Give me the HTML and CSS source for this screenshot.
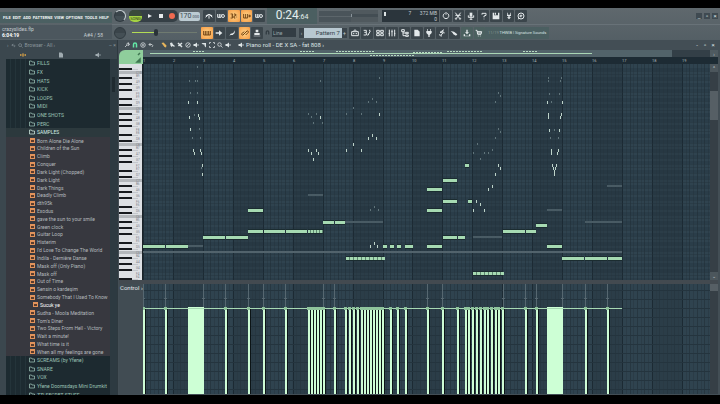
FILE: index.html
```
<!DOCTYPE html>
<html lang="en">
<head>
  <meta charset="UTF-8" />
  <meta name="viewport" content="width=device-width, initial-scale=1.0"/>
  <title>crazyslides.flp</title>
  <link rel="stylesheet" href="styles.css">
</head>
<body>
  <svg class="sprite" aria-hidden="true">
    <symbol id="i-wait" viewBox="0 0 12 12"><path d="M1 8 6 3l5 5M6 3v7M1 6l3-2M11 6 8 4"/></symbol>
    <symbol id="i-loop" viewBox="0 0 12 12"><path d="M1 3v5h5V3M3.500 3v5"/><circle cx="9" cy="6" r="2.200"/></symbol>
    <symbol id="i-count" viewBox="0 0 12 12"><path d="M1 3h3v6H1M2 6h2M6 3h2v3H6v3h2M10 4v1M10 7v1"/></symbol>
    <symbol id="i-step" viewBox="0 0 12 12"><path d="M1 3v6h6V3M4 3v6M8 6h4M10 4v4"/></symbol>
    <symbol id="i-keys" viewBox="0 0 12 12"><path d="M1 3v6h10V3M3.500 3v6M6 3v6M8.500 3v6"/></symbol>
    <symbol id="i-arrow" viewBox="0 0 12 12"><path class="fill" d="M1 5h5V2l5 4-5 4V7H1z"/></symbol>
    <symbol id="i-slide" viewBox="0 0 12 12"><path class="fill" d="M2 10 4 7l4-1 2-4v4L7 9H4z"/></symbol>
    <symbol id="i-link" viewBox="0 0 12 12"><path d="M5 7 3 9a1.500 1.500 0 0 1-2-2l4-3M7 5l2-2a1.500 1.500 0 0 1 2 2L7 9M4 8l4-4"/></symbol>
    <symbol id="i-stamp" viewBox="0 0 12 12"><path class="fill" d="M4 1h4v4H4zM2 6h8v3H2zM1 10h10v1H1z"/></symbol>
    <symbol id="i-list" viewBox="0 0 12 12"><path d="M1 4h10v6H1zM3 7h2M7 7h2M3 4l3-3 3 3"/></symbol>
    <symbol id="i-roll" viewBox="0 0 12 12"><path d="M1 2h4v3H2M1 9h4V5M7 10l4-7M7 8h2M9 2h2"/></symbol>
    <symbol id="i-rack" viewBox="0 0 12 12"><path d="M1 2h4v3H1zM7 2h4v3H7zM1 7h4v3H1zM7 7h4v3H7z"/></symbol>
    <symbol id="i-mixer" viewBox="0 0 12 12"><path d="M2 1v10M6 1v10M10 1v10M1 7h2M5 4h2M9 7h2"/></symbol>
    <symbol id="i-tree" viewBox="0 0 12 12"><path d="M1 1h4v3H1zM3 4v6h4M3 6h4M7 5h4v2H7zM7 9h4v2H7z"/></symbol>
    <symbol id="i-file" viewBox="0 0 12 12"><path class="fill" d="M2 1h5l3 3v7H2z"/></symbol>
    <symbol id="i-plug" viewBox="0 0 12 12"><path class="fill" d="M3 0h1v3h4V0h1v3h1v3L7 9v3H5V9L2 6V3h1z"/></symbol>
    <symbol id="i-brush" viewBox="0 0 12 12"><path d="M9 1 3 5l5 1-4 3 2 2M2 8l2 3M6 3l4 3"/></symbol>
    <symbol id="i-touch" viewBox="0 0 12 12"><path class="fill" d="m1 3 5 1 5 4-2 2-4-2-1-2z"/></symbol>
    <symbol id="i-down" viewBox="0 0 12 12"><path class="fill" d="M5 1h2v4h2L6 8 3 5h2zM1 8h2v2h6V8h2v3H1z"/></symbol>
    <symbol id="i-cart" viewBox="0 0 12 12"><path d="M1 2h2l1 6h5l1-4H3M5 10v1M8 10v1M4 6h5"/></symbol>
    <symbol id="i-undo" viewBox="0 0 12 12"><path d="M4 2a4.200 4.200 0 1 0 4 0M6 0v4"/></symbol>
    <symbol id="i-cut" viewBox="0 0 12 12"><path d="m2 1 6 8M10 1 4 9M2 5h8"/><circle cx="3" cy="10" r="1"/><circle cx="9" cy="10" r="1"/></symbol>
    <symbol id="i-mic" viewBox="0 0 12 12"><path class="fill" d="M4 1h4v6H4z"/><path d="M2 5v3h8V5M6 8v3M4 11h4"/></symbol>
    <symbol id="i-help" viewBox="0 0 12 12"><path d="M3 4V2h6v3L6 6v2M6 10v1"/></symbol>
    <symbol id="i-save" viewBox="0 0 12 12"><path class="fill" d="M1 1h2v4h6V1h2v10H1zM4 1h2v3H4z"/></symbol>
    <symbol id="i-export" viewBox="0 0 12 12"><path class="fill" d="M3 1h1v3h4V1h1v5H3zM5 6h2v2h2l-3 3-3-3h2z"/></symbol>
    <symbol id="i-chat" viewBox="0 0 12 12"><circle cx="6" cy="6" r="4.500"/><path d="M4 5h4M4 7h3M3 9l-1 2"/></symbol>
    <symbol id="i-wrench" viewBox="0 0 12 12"><path d="m2 10 4-4M6 6a3 3 0 0 1 4-4L8 4l1 1 2-1a3 3 0 0 1-4 3"/></symbol>
    <symbol id="i-magnet" viewBox="0 0 12 12"><path class="thick" d="M3 11V5a3 3 0 0 1 6 0v6"/></symbol>
    <symbol id="i-ring" viewBox="0 0 12 12"><circle cx="6" cy="6" r="4.500"/><circle cx="6" cy="6" r="1.200"/></symbol>
    <symbol id="i-back" viewBox="0 0 12 12"><path d="M5 2 2 5l3 3M2 5h6q3 1 0 5"/></symbol>
    <symbol id="i-pencil" viewBox="0 0 12 12"><path class="fill" d="m1 2 4-1 6 6-1 4-3-1z"/></symbol>
    <symbol id="i-paint" viewBox="0 0 12 12"><path class="fill" d="m2 2 4-1 2 4 3 2v3L7 8 5 10 3 7z"/></symbol>
    <symbol id="i-erase" viewBox="0 0 12 12"><path class="thick" d="m2 2 8 8M10 2 3 8M2 5h3"/></symbol>
    <symbol id="i-no" viewBox="0 0 12 12"><circle cx="6" cy="6" r="4.500"/><path d="m3 9 6-6"/></symbol>
    <symbol id="i-mute" viewBox="0 0 12 12"><path class="fill" d="M1 4h3l4-3v10L4 8H1z"/><path d="M10 4v4"/></symbol>
    <symbol id="i-slice" viewBox="0 0 12 12"><path class="fill" d="M1 2h9v9L7 8V5H4z"/></symbol>
    <symbol id="i-select" viewBox="0 0 12 12"><path d="M1 4V1h3M8 1h3v3M11 8v3H8M4 11H1V8"/></symbol>
    <symbol id="i-zoom" viewBox="0 0 12 12"><circle cx="5" cy="5" r="3.500"/><path d="m8 8 3 3"/></symbol>
    <symbol id="i-folder" viewBox="0 0 12 12"><path d="M1 10V2h4l1 2h5v6z"/></symbol>
    <symbol id="i-plus" viewBox="0 0 12 12"><path d="M6 2v8M2 6h8M1 4v4M11 4v4"/></symbol>
  </svg>

  <main class="app">
    <header class="toolbar">
      <div class="info">
        <nav class="menu">
          <button>FILE</button><button>EDIT</button><button>ADD</button><button>PATTERNS</button><button>VIEW</button><button>OPTIONS</button><button>TOOLS</button><button>HELP</button>
        </nav>
        <div class="hint">
          <span>crazyslides.flp</span>
          <span class="hint-row"><b>6:04:19</b><span>A#4 / 58</span></span>
        </div>
      </div>

      <div class="controls">
        <div class="row">
          <button class="knob lit" aria-label="Main volume"></button>
          <div class="transport">
            <button class="mode" aria-label="Song mode">SONG</button>
            <button class="play" aria-label="Play"></button>
            <button class="stop" aria-label="Stop"></button>
            <button class="record" aria-label="Record"></button>
          </div>
          <div class="tempo">170<small>.000</small></div>
          <div class="tools">
            <button class="tool" aria-label="Wait for input"><svg><use href="#i-wait"/></svg></button>
            <button class="tool" aria-label="Loop record"><svg><use href="#i-loop"/></svg></button>
            <button class="tool on" aria-label="Countdown"><svg><use href="#i-count"/></svg></button>
            <button class="tool on" aria-label="Step edit"><svg><use href="#i-step"/></svg></button>
            <button class="tool" aria-label="Overdub"><svg><use href="#i-loop"/></svg></button>
          </div>
          <div class="time">0:24<small>:64</small></div>
          <div class="scope"><i></i><i></i></div>
          <div class="pitch"><i></i></div>
          <div class="cpu"><i></i><span>7</span><span class="mem">372 MB<br>0</span></div>
          <div class="tools seven">
            <button class="tool" aria-label="Undo"><svg><use href="#i-undo"/></svg></button>
            <button class="tool" aria-label="Cut"><svg><use href="#i-cut"/></svg></button>
            <button class="tool" aria-label="Record audio"><svg><use href="#i-mic"/></svg></button>
            <button class="tool" aria-label="Help"><svg><use href="#i-help"/></svg></button>
            <button class="tool" aria-label="Save"><svg><use href="#i-save"/></svg></button>
            <button class="tool" aria-label="Export"><svg><use href="#i-export"/></svg></button>
            <button class="tool" aria-label="Chat"><svg><use href="#i-chat"/></svg></button>
          </div>
          <div class="window-buttons boxed">
            <button aria-label="Minimize">_</button><button aria-label="Restore">▫</button><button aria-label="Close">×</button>
          </div>
        </div>

        <div class="row">
          <button class="knob" aria-label="Main pitch"></button>
          <input class="position" type="range" min="0" max="100" value="36" aria-label="Song position">
          <div class="tools">
            <button class="tool on" aria-label="Typing keyboard"><svg><use href="#i-keys"/></svg></button>
            <button class="tool" aria-label="Auto scroll"><svg><use href="#i-arrow"/></svg></button>
            <button class="tool" aria-label="Slide"><svg><use href="#i-slide"/></svg></button>
            <button class="tool on" aria-label="Group"><svg><use href="#i-link"/></svg></button>
            <button class="tool" aria-label="Multilink"><svg><use href="#i-stamp"/></svg></button>
          </div>
          <svg class="snap-icon"><use href="#i-magnet"/></svg>
          <select class="snap" aria-label="Snap"><option>Line</option></select>
          <div class="pattern">
            <button aria-label="Previous pattern">›</button>
            <select aria-label="Pattern"><option>Pattern 7</option></select>
            <button aria-label="Add pattern">+</button>
          </div>
          <div class="tools eleven">
            <button class="tool" aria-label="Playlist"><svg><use href="#i-list"/></svg></button>
            <button class="tool" aria-label="Piano roll"><svg><use href="#i-roll"/></svg></button>
            <button class="tool" aria-label="Channel rack"><svg><use href="#i-rack"/></svg></button>
            <button class="tool" aria-label="Mixer"><svg><use href="#i-mixer"/></svg></button>
            <button class="tool" aria-label="Browser"><svg><use href="#i-tree"/></svg></button>
            <button class="tool" aria-label="New file"><svg><use href="#i-file"/></svg></button>
            <button class="tool" aria-label="Plugins"><svg><use href="#i-plug"/></svg></button>
            <button class="tool" aria-label="Tempo tap"><svg><use href="#i-brush"/></svg></button>
            <button class="tool" aria-label="Touch"><svg><use href="#i-touch"/></svg></button>
            <button class="tool teal" aria-label="Download"><svg><use href="#i-down"/></svg></button>
            <button class="tool teal" aria-label="Shop"><svg><use href="#i-cart"/></svg></button>
          </div>
          <div class="news"><span>11/19</span> THWIB | Signature Sounds</div>
        </div>
      </div>
    </header>

    <div class="workspace">
      <aside class="browser">
        <div class="browser-head">
          <span>›</span><svg><use href="#i-back"/></svg><svg><use href="#i-zoom"/></svg><span>Browser - All ›</span><span class="push">– ×</span>
        </div>
        <div class="browser-tabs">
          <button class="active" aria-label="All"><svg><use href="#i-plus"/></svg></button>
          <button aria-label="Project"><svg><use href="#i-file"/></svg></button>
          <button aria-label="Plugins"><svg><use href="#i-mute"/></svg></button>
        </div>
        <div class="browser-body">
          <div class="tree"><ul id="tree"></ul></div>
          <div class="browser-scroll"><i></i></div>
        </div>
      </aside>

      <section class="roll">
        <div class="roll-head">
          <div class="roll-tools">
            <svg><use href="#i-wrench"/></svg>
            <svg class="green"><use href="#i-magnet"/></svg>
            <svg><use href="#i-ring"/></svg>
            <svg><use href="#i-back"/></svg>
          </div>
          <div class="roll-tools">
            <svg class="orange"><use href="#i-pencil"/></svg>
            <svg><use href="#i-paint"/></svg>
            <svg><use href="#i-erase"/></svg>
            <svg><use href="#i-no"/></svg>
            <svg><use href="#i-mute"/></svg>
            <svg><use href="#i-slice"/></svg>
            <svg><use href="#i-select"/></svg>
            <svg><use href="#i-zoom"/></svg>
            <svg><use href="#i-mute"/></svg>
          </div>
          <div class="roll-title"><svg><use href="#i-mute"/></svg><span>Piano roll - DE X SA - fat 808 ›</span></div>
          <div class="window-buttons">
            <button aria-label="Minimize">-</button><button aria-label="Restore">▫</button><button aria-label="Close">×</button>
          </div>
        </div>

        <div class="roll-body">
          <div class="corner"><svg viewBox="0 0 24 14"><path d="m19 5 2-2M18 12h3V9z"/></svg></div>
          <div class="scroller"><div class="thumb"><svg id="minimap"></svg></div><button aria-label="Scroll right">›</button></div>
          <svg class="ruler" id="ruler"></svg>
          <svg class="keys" id="keys"></svg>
          <svg class="notes" id="notes"></svg>
          <div class="vscroll"><button aria-label="Scroll up">^</button><i></i><button class="last" aria-label="Scroll down">⌄</button></div>
          <div class="splitter"></div>
          <div class="control-label"><button>Control ›</button></div>
          <svg class="velocity" id="velocity"></svg>
          <div class="vscroll low"><i></i></div>
        </div>
      </section>
    </div>
  </main>

  <script src="roll.js"></script>
</body>
</html>
```

FILE: styles.css
```
* {
  margin: 0;
  padding: 0;
  box-sizing: border-box;
}

body {
  height: 100vh;
  padding: 8px 0 9px;
  background: #000;
  overflow: hidden;
  color: #c3ccd0;
  font-family: Roboto, "Liberation Sans", sans-serif;
  font-size: 5px;
  line-height: 6px;
}

button,
select,
input {
  border: none;
  background: none;
  color: inherit;
  font: inherit;
  appearance: none;
}

svg {
  display: block;
  fill: none;
  stroke: currentColor;
  stroke-width: 1.5;
}

.fill {
  fill: currentColor;
  stroke: none;
}

.thick {
  stroke-width: 3;
}

.sprite {
  position: absolute;
  width: 0;
  height: 0;
}

.app {
  height: 100%;
  display: flex;
  flex-direction: column;
  background: #434f56;
}

/* toolbar */
.toolbar {
  display: flex;
  flex: 0 0 32px;
  background: linear-gradient(#5f686d, #545f65);
}

.info {
  flex: 0 0 112px;
  min-width: 0;
  display: flex;
  flex-direction: column;
  gap: 2px;
  padding: 4px 0 1px;
}

.menu {
  flex: 1;
  display: flex;
  align-items: center;
  justify-content: space-between;
  padding: 0 3px;
  background: #4b6062;
  color: #eef4f4;
  font-size: 4px;
  font-weight: bold;
}

.hint {
  flex: 0 0 14px;
  display: flex;
  flex-direction: column;
  padding: 1px 2px;
  background: #4c575e;
}

.hint-row {
  display: flex;
  justify-content: space-between;
  padding-right: 7px;
}

.hint b {
  color: #fff;
}

.controls {
  flex: 1;
  min-width: 0;
}

.row {
  height: 16px;
  display: flex;
  align-items: center;
  padding: 0 2px;
}

.row + .row {
  border-top: 1px solid #687278;
}

.knob {
  width: 12px;
  height: 12px;
  border: 1px solid #303a40;
  border-radius: 50%;
  background: linear-gradient(#3a444a 0 50%, #444f55 50%);
}

.knob.lit {
  border-color: #c9d1d4 #c9d1d4 #303a40 #303a40;
}

.transport {
  display: flex;
  align-items: center;
  justify-content: space-between;
  width: 49px;
  height: 12px;
  margin-left: 3px;
  padding-right: 3px;
  border-radius: 5px;
  background: #353f45;
}

.mode {
  width: 13px;
  height: 12px;
  padding-top: 5px;
  border-radius: 5px;
  background: linear-gradient(#3a4a3a 0 50%, #a5d343 50%);
  color: #26351a;
  font-size: 4px;
}

.play {
  border: 2px solid transparent;
  border-left: 4px solid #e6eaec;
  border-right: none;
}

.stop {
  width: 4px;
  height: 4px;
  background: #e6eaec;
}

.record {
  width: 6px;
  height: 6px;
  border-radius: 50%;
  background: #f06a50;
}

.tempo {
  width: 21px;
  height: 9px;
  margin: 0 3px 0 1px;
  border-radius: 2px;
  background: #bccbd2;
  color: #3a4850;
  font-size: 7px;
  line-height: 9px;
  text-align: center;
}

.tempo small {
  font-size: 4px;
}

.tools {
  display: flex;
  gap: 1px;
  width: 62px;
}

.tool {
  flex: 1;
  height: 12px;
  display: flex;
  align-items: center;
  justify-content: center;
  border-radius: 1px;
  background: #3b454b;
  color: #e3e8ea;
}

.tool svg {
  width: 8px;
  height: 8px;
}

.tool.on {
  background: radial-gradient(#ffd58b, #f79a41);
  color: #744413;
}

.tool.teal {
  background: #4b605f;
}

.time {
  width: 50px;
  margin-left: 2px;
  background: #4b5f61;
  color: #e5efee;
  font-size: 12px;
  line-height: 14px;
  text-align: center;
}

.time small {
  font-size: 7px;
}

.scope {
  display: grid;
  gap: 1px;
  width: 32px;
  margin-left: 2px;
}

.scope i {
  height: 5px;
  background: #4a545a;
}

.pitch {
  width: 27px;
  height: 12px;
  padding: 4px 0;
  background: #50595e;
}

.pitch i {
  display: block;
  height: 3px;
  border-left: 1px solid #89939a;
  background: #434d53;
}

.cpu {
  display: flex;
  justify-content: space-between;
  width: 57px;
  height: 12px;
  margin: 0 1px 0 4px;
  padding: 0 2px;
  background: #2b353c;
}

.cpu i {
  width: 2px;
  height: 4px;
  margin: 2px 14px 0 0;
  background: #dce3e5;
}

.mem {
  text-align: right;
}

.seven {
  width: 87px;
}

.eleven {
  width: 136px;
}

.window-buttons {
  display: flex;
  gap: 2px;
  margin-left: auto;
}

.window-buttons button {
  width: 6px;
  height: 6px;
  color: #dde3e6;
  font-size: 6px;
}

.boxed button {
  background: #3f4a51;
}

.position {
  width: 65px;
  height: 10px;
  margin: 0 4px 0 6px;
  background: linear-gradient(90deg, #b3dc55 36%, #6f7a70 36%) center / 100% 1px no-repeat;
}

.position::-webkit-slider-thumb {
  width: 4px;
  height: 7px;
  border-radius: 2px;
  background: #293238;
  appearance: none;
}

.snap-icon {
  width: 5px;
  height: 5px;
  margin: 0 2px;
  color: #303a40;
}

.snap {
  width: 24px;
  height: 9px;
  padding-left: 1px;
  background: #333d44;
  color: #9aa7ad;
}

.pattern {
  display: flex;
  width: 48px;
  height: 10px;
  margin: 0 2px 0 3px;
  background: #3a444b;
}

.pattern button {
  width: 5px;
}

.pattern select {
  flex: 1;
  padding-right: 2px;
  background: #b8c8d1;
  color: #34424b;
  font-size: 6px;
  text-align: right;
  text-align-last: right;
}

.news {
  width: 64px;
  height: 12px;
  padding-left: 3px;
  background: #4b5f61;
  color: #d8e2e1;
  font-size: 4px;
  line-height: 12px;
  white-space: nowrap;
}

.news span {
  color: #81938f;
}

/* browser */
.workspace {
  flex: 1;
  min-height: 0;
  display: flex;
}

.browser {
  flex: 0 0 118px;
  display: flex;
  flex-direction: column;
  padding-left: 4px;
  background: #3b474e;
  border-right: 1px solid #2e393f;
}

.browser-head {
  display: flex;
  flex: 0 0 10px;
  align-items: center;
  gap: 2px;
  padding: 0 1px 0 3px;
  color: #8b979d;
}

.browser-head svg {
  width: 5px;
  height: 5px;
}

.push {
  margin-left: auto;
}

.browser-tabs {
  display: flex;
  flex: 0 0 9px;
}

.browser-tabs button {
  flex: 1;
  color: #a0abb0;
}

.browser-tabs svg {
  width: 6px;
  height: 6px;
  margin: 0 auto;
}

.browser-tabs .active {
  color: #e4a845;
}

.browser-body {
  flex: 1;
  min-height: 0;
  display: flex;
  padding-left: 2px;
}

.tree {
  flex: 1;
  min-width: 0;
  overflow: hidden;
}

.tree ul {
  height: calc(100% + 4px);
  display: flex;
  flex-direction: column;
  list-style: none;
}

.tree li {
  flex: 10 1 0;
  min-height: 0;
  display: flex;
  align-items: center;
  gap: 2px;
  padding-left: 24px;
  background: #37383f;
  color: #b4b9bd;
  white-space: nowrap;
}

.tree li.folder {
  flex-grow: 11;
  padding-left: 23px;
  background: repeating-linear-gradient(90deg, #1d2b31 0 4px, #24343a 4px 5px) 0 0 / 20px 100% no-repeat #1d2a30;
  color: #9cc2b5;
}

.tree li.open {
  background: #2c393d;
  color: #d3eee4;
}

.tree li.playing {
  padding-left: 27px;
  color: #fff;
}

.tree li svg {
  width: 6px;
  height: 6px;
}

.wave {
  width: 5px;
  height: 5px;
  border: 1px solid #e2935b;
  background: #5b3c2d;
  box-shadow: inset 0 1px #e2935b;
}

.browser-scroll {
  width: 7px;
  padding: 18px 2px 0;
  background: #2d3a41;
}

.browser-scroll i {
  display: block;
  width: 3px;
  height: 15px;
  background: #1f2a30;
}

/* piano roll */
.roll {
  flex: 1;
  min-width: 0;
  display: flex;
  flex-direction: column;
  padding: 0 2px 1px 1px;
  background: #434e55;
}

.roll-head {
  flex: 0 0 10px;
  display: flex;
  align-items: center;
  gap: 7px;
  padding: 0 2px 0 5px;
  color: #dde3e5;
}

.roll-head svg {
  width: 6px;
  height: 6px;
}

.roll-tools {
  display: flex;
  gap: 2px;
}

.roll-title {
  display: flex;
  gap: 2px;
  font-size: 6px;
}

.green {
  color: #63e7a6;
}

.orange {
  color: #e6b45c;
}

.roll-body {
  flex: 1;
  min-height: 0;
  display: grid;
  grid-template-columns: 24px 1fr 8px;
  grid-template-rows: 7px 7px 1fr 4px 110px;
}

.corner {
  grid-row: 1 / 3;
  border-top-left-radius: 6px;
  background: #8fce9c;
  color: #3e7550;
}

.scroller {
  grid-column: 2 / 4;
  display: flex;
  justify-content: space-between;
  background: #333f47;
}

.thumb {
  width: 92%;
  background: #52636a;
}

.thumb svg {
  width: 100%;
  height: 7px;
}

.scroller button {
  width: 8px;
  background: #4f5a60;
}

.ruler {
  grid-column: 2 / 4;
  width: 100%;
  height: 100%;
  background: #1d2b34;
}

.ruler text {
  fill: #a9b5ba;
  stroke: none;
  font-size: 4px;
}

.keys,
.notes,
.velocity {
  width: 100%;
  height: 100%;
  background: #2f434f;
}

.keys {
  background: #dde0e4;
}

.keys text {
  fill: #7d8288;
  stroke: none;
  font-size: 3px;
}

.notes {
  min-height: 0;
}

.vscroll {
  display: flex;
  flex-direction: column;
  background: #363f46;
}

.vscroll i {
  height: 29px;
  margin-top: 19px;
  background: #565f65;
}

.vscroll button {
  height: 8px;
  background: #4c565c;
}

.vscroll .last {
  margin-top: auto;
}

.vscroll.low i {
  height: 7px;
  margin: 0;
}

.splitter {
  grid-column: 1 / 4;
  background: #434a50;
}

.control-label {
  padding: 1px 0 0 1px;
  background: #414c53;
  color: #e0e5e7;
  font-size: 6px;
  white-space: nowrap;
}
```

FILE: roll.js
```
const NS = 'http://www.w3.org/2000/svg';
const BAR = 29.94;
const ROW = 3;
const LEFT = 143;   // canvas x of bar 1
const TOP = 64;     // canvas y of the first key row

function add(parent, tag, attrs, text) {
  const el = document.createElementNS(NS, tag);
  for (const key in attrs) el.setAttribute(key, attrs[key]);
  if (text) el.textContent = text;
  parent.appendChild(el);
  return el;
}

function rect(parent, x, y, width, height, fill) {
  return add(parent, 'rect', { x, y, width, height, fill, stroke: 'none' });
}

/* browser tree */
const folders = ['FILLS', 'FX', 'HATS', 'KICK', 'LOOPS', 'MIDI', 'ONE SHOTS', 'PERC', 'SAMPLES'];
const samples = ['Born Alone Die Alone', 'Children of the Sun', 'Climb', 'Conquer', 'Dark Light (Chopped)',
  'Dark Light', 'Dark Things', 'Deadly Climb', 'dth95k', 'Exodus', 'gave the sun to your smile',
  'Green clock', 'Guitar Loop', 'Histerim', "I'd Love To Change The World", 'Indila - Dernière Danse',
  'Mask off (Only Piano)', 'Mask off', 'Out of Time', 'Sensin o kardeşim', 'Somebody That I Used To Know',
  'Sucuk ye', 'Sudha - Moola Meditation', "Tom's Diner", 'Two Steps From Hell - Victory',
  'Wait a minute!', 'What time is it', 'When all my feelings are gone'];
const moreFolders = ['SCREAMS (by Yfene)', 'SNARE', 'VOX', 'Yfene Doomsdays Mini Drumkit', 'ZZ! SECRET STUFF'];

const tree = document.getElementById('tree');

function addFolder(name) {
  const open = name === 'SAMPLES' ? ' open' : '';
  tree.insertAdjacentHTML('beforeend',
    `<li class="folder${open}"><svg><use href="#i-folder"/></svg>${name}</li>`);
}

folders.forEach(addFolder);
samples.forEach(name => {
  const playing = name === 'Sucuk ye' ? ' class="playing"' : '';
  tree.insertAdjacentHTML('beforeend', `<li${playing}><span class="wave"></span>${name}</li>`);
});
moreFolders.forEach(addFolder);

/* keyboard and grid */
const keys = document.getElementById('keys');
const notes = document.getElementById('notes');
const velocity = document.getElementById('velocity');
const ruler = document.getElementById('ruler');
const names = ['C', 'C#', 'D', 'D#', 'E', 'F', 'F#', 'G', 'G#', 'A', 'A#', 'B'];

function drawBars(svg, height) {
  for (let bar = 0; bar < 60; bar++) {
    const x = bar * BAR;
    if (bar % 2) rect(svg, x, 0, BAR, height, '#2b3d48');
    for (let beat = 1; beat < 8; beat++) {
      rect(svg, Math.round(x + beat * BAR / 8), 0, 1, height, beat % 2 ? '#29394399' : '#273741');
    }
    rect(svg, Math.round(x), 0, 1, height, '#1c2a33');
  }
}

drawBars(notes, 400);
drawBars(velocity, 200);

// C5 sits at canvas y 252
for (let i = -9; i < 62; i++) {
  const y = 251 - TOP - i * ROW;
  const note = names[((i % 12) + 12) % 12];
  const black = note.includes('#');
  rect(notes, 0, y, 2000, black ? 3 : 1, black ? '#1f2e3744' : '#22313b66');
  if (black) {
    rect(keys, 0, y, 13, 2, '#16191d');
    rect(keys, 13, y + 1, 6, 1, '#c3c7cc');
  } else {
    if (note === 'C') rect(keys, 0, y, 24, 3, '#b3b7bb');
    add(keys, 'text', { x: 17, y: y + 3 }, note + (5 + Math.floor(i / 12)));
  }
}
rect(keys, 23, 0, 1, 400, '#1b2328');
for (let y = 6; y < 200; y += 9) rect(velocity, 0, y, 2000, 1, '#24343e');

for (let bar = 0; bar < 19; bar++) {
  add(ruler, 'text', { x: Math.round(bar * BAR), y: 5 }, String(bar + 1));
}

rect(notes, 0, 251 - TOP, 479, 2, '#52636c');

/* notes: [start, end, y] */
const long = [
  [143, 165, 246], [166, 188, 246], [203, 225, 237], [226, 248, 237], [248, 263, 231], [264, 285, 231],
  [286, 307, 231], [248, 263, 210], [323, 334, 222], [335, 345, 222], [383, 387, 246], [390, 394, 246],
  [397, 401, 246], [405, 413, 246], [427, 442, 246], [427, 442, 210], [427, 442, 189], [443, 457, 180],
  [443, 457, 201], [443, 457, 237], [458, 465, 237], [465, 469, 165], [468, 472, 201], [503, 525, 231],
  [526, 536, 231], [536, 547, 225], [547, 562, 246], [562, 584, 258], [585, 607, 258], [608, 622, 258]
];
const ghosts = [
  [188, 203, 246], [308, 323, 195], [345, 383, 222], [473, 502, 237], [547, 562, 210],
  [585, 622, 222], [607, 622, 186]
];
const runs = [[308, 323, 231, 3], [346, 383, 258, 4], [473, 503, 273, 4]];

ghosts.forEach(([a, b, y]) => rect(notes, a - LEFT, y - TOP - 1, b - a, 2, '#495b64'));
long.forEach(([a, b, y]) => {
  rect(notes, a - LEFT, y - TOP - 2, b - a, 5, '#1b2c30');
  rect(notes, a - LEFT, y - TOP - 1, b - a, 3, '#a6dab2');
});
runs.forEach(([a, b, y, step]) => {
  rect(notes, a - LEFT, y - TOP - 2, b - a, 5, '#1b2c30');
  rect(notes, a - LEFT, y - TOP - 1, b - a, 3, '#5f8770');
  for (let x = a; x < b; x += step) rect(notes, x - LEFT, y - TOP - 1, step - 1, 3, '#a6dab2');
});

/* short hits: [x, y] */
const bright = [
  [188, 102], [197, 102], [189, 117], [198, 115], [199, 118], [190, 129], [193, 150], [194, 153], [200, 150],
  [201, 153], [202, 165], [202, 174], [308, 150], [311, 153], [313, 159], [316, 150], [318, 153], [320, 117],
  [379, 114], [372, 135], [368, 138], [376, 138], [353, 144], [346, 150], [361, 150], [370, 246], [374, 243],
  [377, 246], [476, 201], [480, 204], [473, 210], [484, 210], [488, 189], [492, 186], [495, 174], [498, 165],
  [500, 168], [547, 102], [562, 102], [548, 114], [548, 117], [561, 114], [560, 117], [549, 130], [559, 130],
  [551, 150], [551, 153], [558, 150], [557, 153], [552, 165], [556, 165], [553, 168], [555, 168], [554, 171],
  [554, 174]
];
const dim = [
  [197, 67], [189, 81], [197, 81], [195, 81], [190, 93], [197, 93], [194, 115], [199, 129], [192, 138],
  [200, 138], [201, 168], [320, 81], [308, 114], [316, 114], [311, 117], [313, 123], [322, 123], [379, 78],
  [368, 102], [372, 99], [376, 102], [353, 108], [346, 114], [361, 114], [498, 93], [500, 96], [495, 102],
  [498, 129], [500, 132], [495, 138], [477, 144], [473, 153], [480, 159], [484, 153], [488, 153], [492, 150],
  [370, 210], [374, 207], [378, 210], [548, 78], [561, 78], [549, 94], [559, 94], [551, 102], [550, 138],
  [558, 138], [554, 130], [548, 81], [560, 81]
];
bright.forEach(([x, y]) => rect(notes, x - LEFT, y - TOP - 1, 1, 3, '#bdd3c9'));
dim.forEach(([x, y]) => rect(notes, x - LEFT, y - TOP - 1, 1, 2, '#60747a'));

/* velocity stems */
const stems = [143, 165, 225, 248, 263, 285, 308, 311, 314, 317, 320, 323, 334, 345, 349, 353, 357, 361, 364,
  367, 370, 373, 376, 379, 382, 390, 397, 405, 427, 442, 457, 465, 468, 472, 476, 480, 484, 487, 491, 495,
  498, 502, 525, 536, 585, 607];
const handles = [143, 165, 203, 225, 248, 263, 285, 323, 334, 427, 442, 503, 525, 536, 562, 585, 607];

handles.forEach(x => {
  rect(velocity, x - LEFT, 0, 1, 24, '#566770');
  rect(velocity, x - LEFT - 1, 14, 3, 1, '#566770');
});
stems.forEach(x => {
  rect(velocity, x - LEFT + 1, 24, 2, 120, '#0c1416');
  rect(velocity, x - LEFT, 24, 2, 120, '#cdfcd5');
});
[[188, 204], [547, 563]].forEach(([a, b]) => rect(velocity, a - LEFT, 23, b - a, 120, '#cdffd5'));
rect(velocity, 0, 24, 479, 1, '#a7d9b3');
stems.forEach(x => rect(velocity, x - LEFT - 1, 23, 3, 3, '#8fc49c'));

/* minimap */
const minimap = document.getElementById('minimap');
rect(minimap, 7, 3, 442, 1, '#a9d6b5');
[[50, 62, 1], [157, 172, 1], [193, 232, 1], [227, 270, 5], [270, 298, 2], [304, 340, 1], [380, 394, 1]]
  .forEach(([a, b, y]) => {
    for (let x = a; x < b; x += 3) rect(minimap, x, y, 2, 1, '#b8d9c2');
  });
```
